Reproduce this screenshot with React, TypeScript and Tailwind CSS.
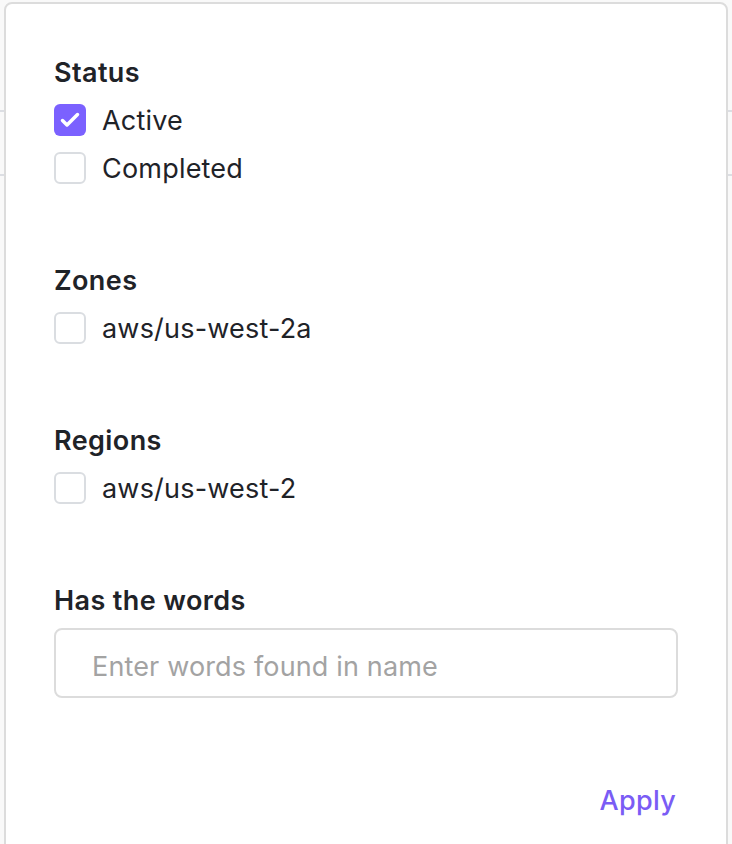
import { useState } from "react";

type Option = { label: string; checked?: boolean };

const sections: { title: string; options: Option[] }[] = [
  { title: "Status", options: [{ label: "Active", checked: true }, { label: "Completed" }] },
  { title: "Zones", options: [{ label: "aws/us-west-2a" }] },
  { title: "Regions", options: [{ label: "aws/us-west-2" }] },
];

function Checkbox({ checked, onToggle, label }: { checked: boolean; onToggle: () => void; label: string }) {
  return (
    <label className="flex items-center gap-4 h-12 cursor-pointer" onClick={onToggle}>
      {checked ? (
        <span className="w-8 h-8 rounded-md bg-[#7b61ff] flex items-center justify-center">
          <svg width="32" height="32" viewBox="0 0 32 32" fill="none">
            <path d="M8.5 16.5l4.5 4.5L23.5 10.5" stroke="white" strokeWidth="3.5" strokeLinecap="round" strokeLinejoin="round" />
          </svg>
        </span>
      ) : (
        <span className="w-8 h-8 rounded-md border-2 border-[#dadde1] bg-white" />
      )}
      <span className="pt-0.5 text-[27px] tracking-[0.2px] text-[#1f2328]">{label}</span>
    </label>
  );
}

export default function App() {
  const [checked, setChecked] = useState<Record<string, boolean>>(() => {
    const init: Record<string, boolean> = {};
    sections.forEach((s) => s.options.forEach((o) => (init[o.label] = !!o.checked)));
    return init;
  });

  return (
    <div className="relative w-[732px] h-[844px] overflow-hidden bg-[#f9f9f9] font-['Inter',sans-serif]">
      {/* table rows behind the popover */}
      <div className="pt-[110px]">
        <div className="h-16 border-t-2 border-[#dcdee3]" />
        <div className="border-t-2 border-[#dcdee3]" />
      </div>

      <div className="absolute left-1 top-[2px] w-[724px] h-[900px] bg-white border-2 border-[#dcdcdc] rounded-lg px-12 pt-11">
        {sections.map((s) => (
          <div key={s.title} className="mb-16">
            <div className="h-12 pt-0.5 flex items-center text-[27px] font-semibold tracking-[0.4px] text-[#1f2328]">{s.title}</div>
            {s.options.map((o) => (
              <Checkbox
                key={o.label}
                label={o.label}
                checked={checked[o.label]}
                onToggle={() => setChecked((c) => ({ ...c, [o.label]: !c[o.label] }))}
              />
            ))}
          </div>
        ))}

        <div className="h-12 pt-0.5 flex items-center text-[27px] font-semibold tracking-[0.4px] text-[#1f2328]">Has the words</div>
        <input
          className="mt-1 w-full h-[70px] rounded-lg border-2 border-[#dcdcdc] px-9 pt-1.5 text-[27px] tracking-[0.15px] text-[#1f2328] placeholder:text-[#a3a3a3] outline-none"
          placeholder="Enter words found in name"
        />

        <div className="mt-[78px] h-12 pt-0.5 flex items-center justify-end">
          <button className="text-[27px] font-medium tracking-[0.3px] text-[#7a5cf5] mr-0.5">Apply</button>
        </div>
      </div>
    </div>
  );
}
